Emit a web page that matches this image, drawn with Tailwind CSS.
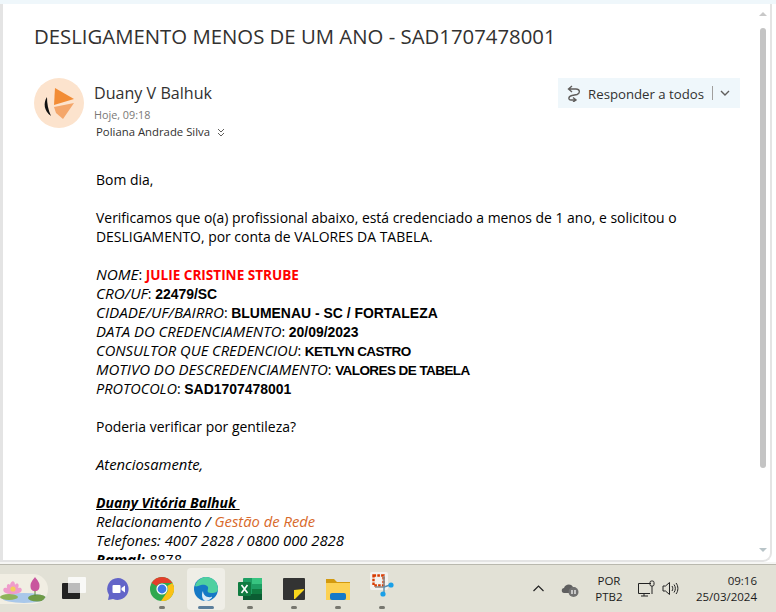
<!DOCTYPE html>
<html lang="en">
<head>
    <meta charset="UTF-8">
    <meta name="viewport" content="width=device-width, initial-scale=1.0">
    <title>Email</title>
    <script src="https://cdn.jsdelivr.net/npm/@tailwindcss/browser@4"></script>
</head>
<body class="w-[776px] h-[612px] overflow-hidden bg-white font-['Open_Sans',sans-serif]">
<div class="flex flex-col h-full">
    <div class="h-[4px] bg-[#eff7fb]"></div>

    <!-- reading pane -->
    <div class="h-[558px] w-[772px] flex overflow-hidden border-l-[3px] border-r-2 border-b-2 border-[#e4e4e4] rounded-br-[9px]">
        <div class="flex-1 min-w-0 overflow-hidden">
            <h1 class="pl-[31px] pt-[19px] text-[20.35px] leading-[27px] text-[#323130] whitespace-nowrap">DESLIGAMENTO MENOS DE UM ANO - SAD1707478001</h1>

            <div class="flex items-start mt-[28px] pl-[31px] pr-[16px]">
                <div class="w-[50px] h-[50px] rounded-full bg-[#fce3cd] flex items-center justify-center shrink-0">
                    <svg width="50" height="50" viewBox="0 0 50 50">
                        <path d="M13 19 C9 25 10 33 17 38 C14 32 13 25 13 19Z" fill="#111"/>
                        <path d="M21 10 L40 21 L20 27Z" fill="#f28c35"/>
                        <path d="M20 29 L40 25 L29 41 L22 35Z" fill="#f4a66a"/>
                    </svg>
                </div>
                <div class="ml-[10px] flex-1 min-w-0 pt-[4px]">
                    <div class="text-[16.1px] leading-[22px] text-[#323130]">Duany V Balhuk</div>
                    <div class="text-[10.8px] leading-[16px] mt-[3px] text-[#7a7876]">Hoje, 09:18</div>
                    <div class="flex items-center text-[11.35px] leading-[16px] mt-px ml-[2px] text-[#323130]">
                        <span>Poliana Andrade Silva</span>
                        <svg class="ml-[7px]" width="8" height="9" viewBox="0 0 8 9" fill="none" stroke="#605e5c" stroke-width="1"><path d="M1 1 L4 4 L7 1M1 5 L4 8 L7 5"/></svg>
                    </div>
                </div>
                <div class="h-[30px] flex items-center bg-[#eff7fb] pl-[9px] pr-[10px] text-[13.2px] text-[#323130]">
                    <svg width="14" height="17" viewBox="0 0 14 17" fill="none" stroke="#605e5c" stroke-width="1.4"><path d="M5 1 L1.5 4 L5 7M1.5 4 H9 C13 4 13.5 8 10 9.5 L5 10.5 C1 11.5 1 15 4 15 H8M6 12.5 L9 15 L6 17"/></svg>
                    <span class="ml-[7px] pt-[3px]">Responder a todos</span>
                    <span class="ml-[8px] w-px h-[14px] bg-[#a19f9d]"></span>
                    <svg class="ml-[7px]" width="10" height="6" viewBox="0 0 10 6" fill="none" stroke="#605e5c" stroke-width="1.4"><path d="M1 1 L5 5 L9 1"/></svg>
                </div>
            </div>

            <!-- message body -->
            <div class="pl-[93px] mt-[30px] text-[13.95px] leading-[19px] text-black whitespace-nowrap">
                <p>Bom dia,</p>
                <p class="mt-[19px]">Verificamos que o(a) profissional abaixo, está credenciado a menos de 1 ano, e solicitou o<br>DESLIGAMENTO, por conta de VALORES DA TABELA.</p>
                <div class="mt-[19px]">
                    <p class="h-[19px]"><i class="text-[15.3px]">NOME</i>: <b class="text-[13.55px] text-[#ff0000]">JULIE CRISTINE STRUBE</b></p>
                    <p class="h-[19px]"><i class="text-[15.3px]">CRO/UF</i>: <b class="font-['Liberation_Sans',sans-serif]">22479/SC</b></p>
                    <p class="h-[19px]"><i class="text-[15.2px]">CIDADE/UF/BAIRRO</i>: <b class="font-['Liberation_Sans',sans-serif]">BLUMENAU - SC / FORTALEZA</b></p>
                    <p class="h-[19px]"><i class="text-[14.9px]">DATA DO CREDENCIAMENTO</i>: <b class="font-['Liberation_Sans',sans-serif]">20/09/2023</b></p>
                    <p class="h-[19px]"><i class="text-[14.7px]">CONSULTOR QUE CREDENCIOU</i>: <b class="text-[13.5px] tracking-[-0.6px] font-['Liberation_Sans',sans-serif]">KETLYN CASTRO</b></p>
                    <p class="h-[19px]"><i class="text-[15px]">MOTIVO DO DESCREDENCIAMENTO</i>: <b class="text-[13.5px] tracking-[-0.57px] font-['Liberation_Sans',sans-serif]">VALORES DE TABELA</b></p>
                    <p class="h-[19px]"><i class="text-[14.5px]">PROTOCOLO</i>: <b class="font-['Liberation_Sans',sans-serif]">SAD1707478001</b></p>
                </div>
                <p class="mt-[19px]">Poderia verificar por gentileza?</p>
                <p class="mt-[19px] italic text-[14.8px]">Atenciosamente,</p>
                <div class="mt-[19px] italic text-[14.8px]">
                    <p class="h-[19px] text-[14px] font-bold underline">Duany Vitória Balhuk&nbsp;</p>
                    <p class="h-[19px]">Relacionamento / <span class="text-[#d8692a]">Gestão de Rede</span></p>
                    <p class="h-[19px]">Telefones: 4007 2828 / 0800 000 2828</p>
                    <p class="h-[19px]"><b>Ramal:</b> 8878</p>
                </div>
            </div>
        </div>

        <!-- scrollbar -->
        <div class="w-[14px] shrink-0 flex flex-col items-center pt-[8px]">
            <span class="w-0 h-0 border-x-[4px] border-x-transparent border-b-[4px] border-b-[#c8c8c8]"></span>
            <span class="w-[6px] h-[440px] mt-[12px] rounded-full bg-[#c4c4c4]"></span>
            <span class="w-0 h-0 mt-[80px] border-x-[4px] border-x-transparent border-t-[4px] border-t-[#b8c4c8]"></span>
        </div>
    </div>

    <div class="h-[2px] bg-[#f6f6f4]"></div>

    <!-- taskbar -->
    <div class="h-[48px] flex items-center bg-[#e2e1d6] border-t border-[#b9b8ae] text-[#1c1c1c]">
        <div class="w-[49px] h-[30px] ml-[-1px] rounded-r-full bg-[#f1eee3] overflow-hidden flex items-center justify-center shrink-0">
            <svg width="48" height="30" viewBox="0 0 48 30">
                <ellipse cx="24" cy="24" rx="22" ry="5" fill="#a9c8ea"/>
                <ellipse cx="37" cy="24" rx="9" ry="3.5" fill="#6f9b47"/>
                <ellipse cx="9" cy="23" rx="9" ry="3" fill="#8fb35a"/>
                <path d="M4 18 C2 14 5 13 7 14 C6 10 9 9 10 11 C11 6 15 6 15 11 C17 8 20 10 18 14 C21 13 23 15 21 18 C16 21 8 21 4 18Z" fill="#ef9ccb"/>
                <circle cx="13" cy="15" r="2.6" fill="#f2cf5b"/>
                <path d="M31 15 C29 9 33 6 35 3 C37 6 41 9 39 15 C37 18 33 18 31 15Z" fill="#c9559e"/>
                <path d="M35 17 V22" stroke="#5a8a3c" stroke-width="1"/>
            </svg>
        </div>

        <div class="ml-[14px] w-[24px] h-[24px] relative shrink-0">
            <span class="absolute left-[6px] top-0 w-[18px] h-[16px] bg-white/80 rounded-[1px]"></span>
            <span class="absolute left-0 top-[6px] w-[18px] h-[16px] bg-[#222] rounded-[1px]"></span>
            <span class="absolute left-[6px] top-[6px] w-[12px] h-[10px] bg-[#bcbcbc]"></span>
        </div>

        <div class="ml-[20px] shrink-0">
            <svg width="24" height="24" viewBox="0 0 24 24">
                <path d="M12 1 A11 11 0 1 1 7 22 L2 23 L3 18 A11 11 0 0 1 12 1Z" fill="#6264c8"/>
                <rect x="6.5" y="8" width="8" height="8" rx="1" fill="#fff"/>
                <path d="M15.5 11 L19 8.5 V15.5 L15.5 13Z" fill="#fff"/>
            </svg>
        </div>

        <div class="ml-[20px] relative shrink-0 w-[24px] h-[40px] flex flex-col items-center justify-center">
            <svg width="24" height="24" viewBox="0 0 24 24">
                <circle cx="12" cy="12" r="12" fill="#2fa84f"/>
                <path d="M12 0 A12 12 0 0 1 22.4 6 L12 6 A6 6 0 0 0 6.8 9 L1.6 6 A12 12 0 0 1 12 0Z" fill="#e33e2b"/>
                <path d="M22.4 6 A12 12 0 0 1 11 24 L17.2 15 A6 6 0 0 0 17.2 9Z" fill="#fbc116"/>
                <circle cx="12" cy="12" r="5.6" fill="#fff"/>
                <circle cx="12" cy="12" r="4.4" fill="#3b78e7"/>
            </svg>
            <span class="absolute bottom-0 w-[6px] h-[3px] rounded-full bg-[#77776f]"></span>
        </div>

        <div class="ml-[13px] relative shrink-0 w-[38px] h-[42px] rounded-[4px] bg-[#efeee7] flex items-center justify-center">
            <svg width="24" height="24" viewBox="0 0 24 24">
                <circle cx="12" cy="12" r="12" fill="#1679c5"/>
                <path d="M1 9 C3 2 9 0 12 0 C19 0 24 5 24 12 C24 15 21 16 18 16 C14 16 13 15 14 12 C15 9 11 7 7 8 C4 9 2 10 1 9Z" fill="#4fd0a0"/>
                <path d="M9 14 C9 18 13 21 17 20 C20 19 16 24 12 24 C8 24 7 17 9 14Z" fill="#fff" opacity="0.85"/>
            </svg>
            <span class="absolute bottom-[1px] w-[16px] h-[3px] rounded-full bg-[#5c7f9c]"></span>
        </div>

        <div class="ml-[13px] relative shrink-0 w-[24px] h-[40px] flex flex-col items-center justify-center">
            <svg width="24" height="22" viewBox="0 0 24 22">
                <rect x="5" y="0" width="19" height="22" rx="1" fill="#1e9e63"/>
                <rect x="14" y="0" width="10" height="6" fill="#37c480"/>
                <rect x="14" y="11" width="10" height="5" fill="#107c41"/>
                <rect x="5" y="16" width="19" height="6" fill="#0b5d33"/>
                <rect x="0" y="4" width="13" height="14" rx="1" fill="#107c41"/>
                <path d="M3.5 7 L9.5 15M9.5 7 L3.5 15" stroke="#fff" stroke-width="1.6"/>
            </svg>
            <span class="absolute bottom-0 w-[6px] h-[3px] rounded-full bg-[#77776f]"></span>
        </div>

        <div class="ml-[21px] relative shrink-0 w-[22px] h-[40px] flex flex-col items-center justify-center">
            <svg width="22" height="22" viewBox="0 0 22 22">
                <rect width="22" height="22" rx="1" fill="#333"/>
                <path d="M11 12 L21 11 L21 12 L12 21 L11 21Z" fill="#f9d71c"/>
            </svg>
            <span class="absolute bottom-0 w-[6px] h-[3px] rounded-full bg-[#77776f]"></span>
        </div>

        <div class="ml-[21px] relative shrink-0 w-[24px] h-[40px] flex flex-col items-center justify-center">
            <svg width="24" height="22" viewBox="0 0 24 22">
                <path d="M0 1 H8 L11 4 H24 V22 H0Z" fill="#d39a0e"/>
                <rect x="0" y="5" width="24" height="17" fill="#fcd153"/>
                <rect x="4" y="15" width="16" height="7" rx="2" fill="#1479c7"/>
            </svg>
            <span class="absolute bottom-0 w-[6px] h-[3px] rounded-full bg-[#77776f]"></span>
        </div>

        <div class="ml-[20px] relative shrink-0 w-[24px] h-[40px] flex flex-col items-center">
            <svg width="24" height="32" viewBox="0 0 24 32" class="mt-[1px]">
                <rect x="0" y="2" width="18" height="18" rx="2" fill="#f2f2f0"/>
                <rect x="3.5" y="5.5" width="10" height="10" fill="none" stroke="#d83b01" stroke-width="2.4" stroke-dasharray="2.6 1.2"/>
                <path d="M14 6 V17 H5" fill="none" stroke="#8a8a8a" stroke-width="1.6"/>
                <path d="M14 17 L20 15M14 17 L14 23" stroke="#5b8fb0" stroke-width="1.4"/>
                <circle cx="21" cy="15" r="2.6" fill="#1aa0e8"/>
                <circle cx="13" cy="24" r="2.6" fill="#1aa0e8"/>
            </svg>
            <span class="absolute bottom-0 w-[6px] h-[3px] rounded-full bg-[#77776f]"></span>
        </div>

        <!-- system tray -->
        <div class="ml-auto flex items-center shrink-0">
            <svg width="11" height="7" viewBox="0 0 11 7" fill="none" stroke="#222" stroke-width="1.2"><path d="M0.5 6 L5.5 1 L10.5 6"/></svg>
            <svg class="ml-[17px]" width="18" height="16" viewBox="0 0 18 16">
                <path d="M3 12 C0 12 0 7 3 7 C4 3 10 2 12 6 C14 6 15 7 15 9 L15 12Z" fill="#5f5f5f"/>
                <circle cx="12.5" cy="11" r="5" fill="#707070"/>
                <path d="M11 9 V13M14 9 V13" stroke="#fff" stroke-width="1.2"/>
            </svg>
            <div class="ml-[15px] w-[30px] text-center text-[11.5px] leading-[16px]">POR<br>PTB2</div>
            <svg class="ml-[14px]" width="18" height="17" viewBox="0 0 18 17" fill="none" stroke="#222" stroke-width="1"><path d="M13 3.5 H0.5 V13.5 H12M6 13.5 V16M3 16 H10"/><rect x="12" y="1" width="4" height="5" rx="1.5"/><path d="M14 6 V14"/></svg>
            <svg class="ml-[6px]" width="17" height="15" viewBox="0 0 17 15" fill="none" stroke="#222" stroke-width="1"><path d="M1 5 H3.5 L7.5 1.5 V13.5 L3.5 10 H1Z"/><path d="M10 5 C11 6.5 11 8.5 10 10M12 3.5 C13.8 6 13.8 9 12 11.5M14 2 C16.5 5 16.5 10 14 13"/></svg>
            <div class="ml-[17px] mr-[19px] text-right text-[11.5px] leading-[16px]">09:16<br>25/03/2024</div>
        </div>
    </div>
</div>
</body>
</html>
